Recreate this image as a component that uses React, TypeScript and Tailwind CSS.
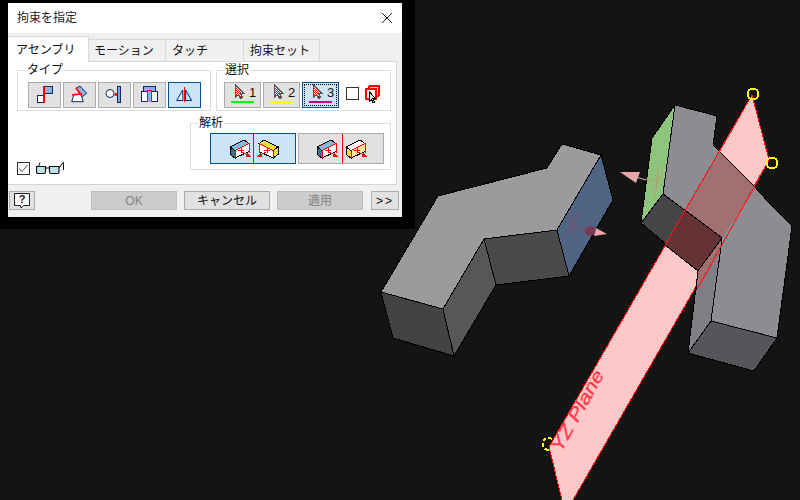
import React from 'react';

const pts = (p: number[][]) => p.map(a => a.join(',')).join(' ');

// 3D viewport shapes, in page coordinates
const faces: { fill: string; p: number[][] }[] = [
    { fill: '#9b9b9e', p: [[381, 292], [438, 196], [547, 168], [562, 144], [601, 155], [557, 230], [484, 239], [443, 309]] },
    { fill: '#434345', p: [[381, 292], [443, 309], [454, 356], [393, 338]] },
    { fill: '#57575a', p: [[443, 309], [484, 239], [496, 285], [454, 356]] },
    { fill: '#4a4a4c', p: [[484, 239], [557, 230], [569, 276], [496, 285]] },
    { fill: '#4f6583', p: [[601, 155], [613, 200], [569, 276], [557, 230]] },
    { fill: '#8dc57c', p: [[675, 105], [652, 138], [641, 223], [663, 194]] },
    { fill: '#8e8c91', p: [[675, 105], [717, 116], [713, 145], [792, 226], [777, 338], [711, 321], [722, 238], [663, 194]] },
    { fill: '#7f8085', p: [[722, 238], [711, 321], [688, 353], [698, 271]] },
    { fill: '#56565a', p: [[711, 321], [777, 338], [754, 371], [688, 353]] },
    { fill: '#454547', p: [[663, 194], [722, 238], [698, 271], [641, 223]] },
];

const overlaps: { fill: string; p: number[][] }[] = [
    { fill: '#a07072', p: [[720, 152], [756, 188], [722, 238], [685, 210]] },
    { fill: '#653335', p: [[685, 210], [722, 238], [698, 271], [665, 245]] },
    { fill: '#a07072', p: [[722, 238], [720, 253], [698, 288], [698, 271]] },
];

const Scene = () => (
    <svg width="800" height="500" viewBox="0 0 800 500" className="absolute inset-0">
        <polygon points={pts([[752, 95], [769, 160], [573, 500], [562, 500], [549, 447]])} fill="#ffc8c8" stroke="#ff1010" shapeRendering="crispEdges" />
        <text transform="translate(561,453) rotate(-61)" fontFamily="'Liberation Sans', sans-serif" fontStyle="italic" fontSize="18" fill="#ff3b4a" stroke="#ff3b4a" strokeWidth="0.3" textLength="90" lengthAdjust="spacingAndGlyphs">YZ Plane</text>
        {faces.map((f, i) => (
            <polygon key={i} points={pts(f.p)} fill={f.fill} stroke="#000" shapeRendering="crispEdges" />
        ))}
        {overlaps.map((f, i) => (
            <polygon key={i} points={pts(f.p)} fill={f.fill} shapeRendering="crispEdges" />
        ))}
        <g stroke="#000" shapeRendering="crispEdges">
            <line x1="720" y1="152" x2="756" y2="188" />
            <line x1="685" y1="210" x2="722" y2="238" />
            <line x1="722" y1="238" x2="698" y2="271" />
            <line x1="665" y1="245" x2="698" y2="271" />
            <line x1="722" y1="238" x2="719" y2="262" />
            <line x1="698" y1="271" x2="696" y2="290" />
        </g>
        <line x1="752" y1="95" x2="665" y2="245" stroke="#ff1010" shapeRendering="crispEdges" />
        <line x1="769" y1="160" x2="698" y2="288" stroke="#ff1010" shapeRendering="crispEdges" />

        {/* work point marks on the faces */}
        <g stroke="#7f4c66" fill="none">
            <line x1="581" y1="210" x2="563" y2="239" />
            <line x1="569" y1="215" x2="575" y2="237" />
            <line x1="572" y1="225" x2="590" y2="231" />
        </g>
        <circle cx="590" cy="231" r="5" fill="#7a3a55" />
        <polygon points="596,228 607,234 594,236" fill="#e8a8aa" />
        <g stroke="#b5a06a" fill="none">
            <line x1="659" y1="164" x2="655" y2="198" />
            <line x1="663" y1="173" x2="651" y2="190" />
            <line x1="646" y1="179" x2="657" y2="182" />
        </g>
        <line x1="636" y1="177" x2="646" y2="180" stroke="#e8b0b0" />
        <polygon points="620,172 640,172 636,183" fill="#e8a8aa" />

        <g fill="none" stroke="#ffff00" strokeWidth="2" shapeRendering="crispEdges">
            <circle cx="753" cy="94" r="5.5" />
            <circle cx="772" cy="163" r="5.5" />
            <path d="M 552 439 A 6 6 0 1 0 552 449" strokeDasharray="4 2" />
        </g>
    </svg>
);

const Group = ({ title, legendClass, className, children }: { title: string; legendClass: string; className: string; children: React.ReactNode }) => (
    <fieldset className={`border border-[#dcdcdc] flex ${className}`}>
        <legend className={`text-[12px] leading-4 text-[#111] px-[1px] ${legendClass}`}>{title}</legend>
        {children}
    </fieldset>
);

const IconButton = ({ active, className, children }: { active?: boolean; className: string; children: React.ReactNode }) => (
    <div className={`relative border h-[26px] shrink-0 ${active ? 'bg-[#cce4f7] border-[#005499]' : 'bg-[#e1e1e1] border-[#adadad]'} ${className}`}>
        {children}
    </div>
);

const navy = '#0b2a6b';

const TypeIcon = ({ n }: { n: number }) => (
    <svg width="33" height="26" viewBox="0 0 33 26" className="absolute -left-px -top-px">
        {n === 0 && (
            <g shapeRendering="crispEdges">
                <rect x="16.5" y="4.5" width="8" height="7" fill="#8fb0dc" stroke={navy} />
                <rect x="9.5" y="13.5" width="7" height="7" fill="#fff" stroke={navy} />
                <rect x="15" y="4" width="2" height="17" fill="#f00" />
            </g>
        )}
        {n === 1 && (
            <g>
                <polygon points="13,6.3 17,4 23.7,11.3 19.3,14.7" fill="#8fb0dc" stroke={navy} />
                <polygon points="8.7,19.7 20.3,19.7 18,12.3 11,12.3" fill="#fff" stroke={navy} />
                <line x1="13" y1="6" x2="19" y2="14" stroke="#f00" strokeWidth="1.6" />
                <line x1="9" y1="13" x2="19" y2="12" stroke="#f00" strokeWidth="1.4" />
            </g>
        )}
        {n === 2 && (
            <g>
                <circle cx="12" cy="11.5" r="4" fill="#fff" stroke={navy} />
                <rect x="19.5" y="4.5" width="3" height="16" fill="#7fa6da" stroke={navy} shapeRendering="crispEdges" />
                <circle cx="18" cy="12.5" r="1.6" fill="#f00" />
            </g>
        )}
        {n === 3 && (
            <g shapeRendering="crispEdges">
                <rect x="10.5" y="4.5" width="12" height="9" fill="#8fb0dc" stroke={navy} />
                <rect x="8.5" y="9.5" width="6" height="10" fill="#fff" stroke={navy} />
                <rect x="18.5" y="9.5" width="6" height="10" fill="#fff" stroke={navy} />
                <rect x="14.5" y="8.5" width="4" height="11" fill="#8fb0dc" />
                <rect x="14" y="8" width="1" height="12" fill="#f00" />
                <rect x="18" y="8" width="1" height="12" fill="#f00" />
                <rect x="14" y="8" width="5" height="1" fill="#f00" />
            </g>
        )}
        {n === 4 && (
            <g>
                <polygon points="8.7,18.5 15,18.5 14.7,8" fill="#e8f0f8" stroke={navy} />
                <polygon points="17.5,18.5 23.7,18.5 17.7,8" fill="#c5d9ef" stroke={navy} />
                <rect x="15.5" y="5" width="1.2" height="15" fill="#f00" shapeRendering="crispEdges" />
            </g>
        )}
    </svg>
);

const Cursor = ({ x, y }: { x: number; y: number }) => (
    <svg width="11" height="16" viewBox="0 0 11 16" className="absolute" style={{ left: x, top: y }}>
        <defs>
            <pattern id="chk" width="2" height="2" patternUnits="userSpaceOnUse">
                <rect width="2" height="2" fill="#fff" />
                <rect width="1" height="1" fill="#f00" />
                <rect x="1" y="1" width="1" height="1" fill="#f00" />
            </pattern>
        </defs>
        <polygon points="1.5,1 1.5,13 4.5,10.5 6.5,14.5 8.5,13.5 6.5,9.5 10,9.5" fill="url(#chk)" stroke="#555" shapeRendering="crispEdges" />
    </svg>
);

const SelectButton = ({ num, bar, active }: { num: string; bar: string; active?: boolean }) => (
    <IconButton active={active} className="w-[37px]">
        {active && <div className="absolute inset-[1px] border border-dotted border-black" />}
        <Cursor x={9} y={1} />
        <span className="absolute left-[24px] top-[2px] text-[13px] leading-4 font-['Liberation_Sans',sans-serif] text-[#111]">{num}</span>
        <div className={`absolute left-[6px] top-[18px] w-[23px] h-[2px] ${bar}`} />
    </IconButton>
);

// little isometric block with the red offset symbol, used by the two analysis buttons
const Block = ({ x, flip, top, front, side }: { x: number; flip?: boolean; top: string; front: string; side: string }) => (
    <g transform={flip ? `translate(${x + 19},6) scale(-1,1)` : `translate(${x},6)`} shapeRendering="crispEdges">
        <polygon points="0,7 14,0 19,3.5 5,10.5" fill={top} stroke="#000" />
        <polygon points="0,7 5,10.5 5,18 0,14.5" fill={side} stroke="#000" />
        <polygon points="5,10.5 19,3.5 19,11.5 5,18" fill={front} stroke="#000" />
        <polyline points="5,18 5,10.5 19,3.5 19,13" fill="none" stroke="#f00" />
        <path d="M 11 7 L 11 13 M 8 10 L 14 10 M 12 12 L 20 16" stroke="#f00" fill="none" />
        <polygon points="17,13 22,17 16,17" fill="#f00" />
    </g>
);

const AnalysisIcon = ({ second }: { second?: boolean }) => (
    <svg width="84" height="29" viewBox="0 0 84 29" className="absolute left-0 top-0">
        <Block x={second ? 18 : 19} top="#8fb5dc" front="#fff" side="#4a6a95" />
        <rect x={second ? 43 : 42} y="0" width="1" height="29" fill="#f00" />
        {second
            ? <Block x={47} top="#fff" front="#ffe9a0" side="#ffdc3c" />
            : <Block x={48} flip top="#ffdc3c" front="#fff" side="#ffdc3c" />}
    </svg>
);

const Glasses = () => (
    <svg width="29" height="13" viewBox="0 0 29 13" className="block">
        <path d="M 4 0.5 L 2.5 4.5" fill="none" stroke="#111" />
        <path d="M 0.5 4.5 L 9.5 4.5 L 9.5 10 Q 9.5 11.5 8 11.5 L 2 11.5 Q 0.5 11.5 0.5 10 Z" fill="#bfe0e6" stroke="#111" strokeWidth="1.2" />
        <path d="M 13.5 4.5 L 23 4.5 L 23 10 Q 23 11.5 21.5 11.5 L 15 11.5 Q 13.5 11.5 13.5 10 Z" fill="#bfe0e6" stroke="#111" strokeWidth="1.2" />
        <path d="M 9.5 6 L 13.5 6 M 23 6 L 26.5 1 L 27.5 0.5 L 27.5 8" fill="none" stroke="#111" />
    </svg>
);

const BottomButton = ({ label, disabled, className }: { label: string; disabled?: boolean; className: string }) => (
    <div className={`border h-[19px] flex items-center justify-center text-[12px] leading-none ${disabled ? 'bg-[#cccccc] border-[#bfbfbf] text-[#838383]' : 'bg-[#e1e1e1] border-[#adadad] text-[#111]'} ${className}`}>
        {label}
    </div>
);

export default function App() {
    return (
        <div className="relative w-[800px] h-[500px] overflow-hidden bg-[#141414] font-['Liberation_Sans','Noto_Sans_CJK_JP',sans-serif]">
            <Scene />

            {/* dialog with its black frame */}
            <div className="absolute left-0 top-0 w-[415px] h-[229px] bg-black pl-[8px] pt-[3px]">
                <div className="w-[394px] h-[214px] flex flex-col bg-[#f0f0f0]">
                    <div className="h-[30px] shrink-0 bg-white flex items-center justify-between pl-[9px] pr-[8px]">
                        <span className="text-[12px] text-[#222]">拘束を指定</span>
                        <svg width="14" height="14" viewBox="0 0 14 14">
                            <path d="M 2 2 L 12 12 M 12 2 L 2 12" stroke="#222" fill="none" />
                        </svg>
                    </div>

                    <div className="relative flex items-end h-[29px] shrink-0 mt-0 pt-[4px]">
                        <div className="relative z-10 w-[81px] h-[26px] bg-white border-t border-r border-[#d9d9d9] text-[12px] text-[#111] pl-[8px] pt-[4px]">アセンブリ</div>
                        <div className="w-[77px] h-[23px] bg-[#f0f0f0] border-t border-r border-b border-[#d9d9d9] text-[12px] text-[#111] pl-[5px] pt-[2px]">モーション</div>
                        <div className="w-[78px] h-[23px] bg-[#f0f0f0] border-t border-r border-b border-[#d9d9d9] text-[12px] text-[#111] pl-[6px] pt-[2px]">タッチ</div>
                        <div className="w-[76px] h-[23px] bg-[#f0f0f0] border-t border-r border-b border-[#d9d9d9] text-[12px] text-[#111] pl-[6px] pt-[2px]">拘束セット</div>
                    </div>

                    <div className="w-[389px] h-[124px] shrink-0 bg-white border-r border-b border-t border-[#d4d4d4] -mt-px pl-[9px] pr-[5px] flex flex-col">
                        <div className="flex justify-between h-[49px] shrink-0">
                            <Group title="タイプ" legendClass="-ml-[2px]" className="w-[194px] pl-[10px] pr-[9px] pt-[4px] gap-[2px]">
                                {[0, 1, 2, 3, 4].map(n => (
                                    <IconButton key={n} active={n === 4} className="w-[33px]">
                                        <TypeIcon n={n} />
                                    </IconButton>
                                ))}
                            </Group>
                            <Group title="選択" legendClass="" className="w-[175px] pl-[7px] pt-[4px] gap-[2px] items-start">
                                <SelectButton num="1" bar="bg-[#00ff00]" />
                                <SelectButton num="2" bar="bg-[#ffff00]" />
                                <SelectButton num="3" bar="bg-[#c4008c]" active />
                                <div className="ml-[5px] mt-[5px] w-[13px] h-[13px] bg-white border border-[#333] shrink-0" />
                                <svg width="16" height="18" viewBox="0 0 16 18" className="ml-[4px] mt-[3px] shrink-0">
                                    <g shapeRendering="crispEdges" fill="none" stroke="#f00">
                                        <rect x="4.5" y="0.5" width="10" height="10" fill="#ffd0d0" />
                                        <rect x="3.5" y="1.5" width="10" height="10" />
                                        <rect x="0.5" y="3.5" width="11" height="11" fill="#fff" />
                                        <rect x="1.5" y="4.5" width="9" height="9" />
                                    </g>
                                    <polygon points="4.5,7 4.5,16 6.5,14.5 8,17.5 9.5,17 8,13.5 10.5,13.5" fill="#ddd" stroke="#000" shapeRendering="crispEdges" />
                                </svg>
                            </Group>
                        </div>
                        <div className="flex justify-between mt-[4px]">
                            <div className="flex items-center gap-[6px] mt-[46px] h-[14px]">
                                <div className="w-[13px] h-[13px] bg-white border border-[#333] flex items-center justify-center">
                                    <svg width="11" height="11" viewBox="0 0 11 11">
                                        <path d="M 1.5 5.5 L 4 8.5 L 9.5 2" fill="none" stroke="#555" />
                                    </svg>
                                </div>
                                <Glasses />
                            </div>
                            <Group title="解析" legendClass="-ml-[12px]" className="w-[201px] h-[55px] pl-[19px] pt-[2px] gap-[2px] items-start">
                                <IconButton active className="w-[86px] !h-[31px]"><AnalysisIcon /></IconButton>
                                <IconButton className="w-[86px] !h-[31px]"><AnalysisIcon second /></IconButton>
                            </Group>
                        </div>
                    </div>

                    <div className="flex items-start pt-[6px] pl-[1px]">
                        <div className="w-[26px] h-[19px] border border-[#adadad] bg-[#e1e1e1] flex items-center justify-center">
                            <svg width="18" height="17" viewBox="0 0 18 17">
                                <path d="M 1.5 1.5 L 16.5 1.5 L 16.5 13.5 L 10.5 13.5 L 8 16 L 7.5 13.5 L 1.5 13.5 Z" fill="#fff" stroke="#222" />
                                <text x="9" y="11" textAnchor="middle" fontSize="11" fontWeight="700" fontFamily="'Liberation Sans', sans-serif" fill="#222">?</text>
                            </svg>
                        </div>
                        <BottomButton label="OK" disabled className="w-[86px] ml-[56px]" />
                        <BottomButton label="キャンセル" className="w-[86px] ml-[7px]" />
                        <BottomButton label="適用" disabled className="w-[86px] ml-[7px]" />
                        <BottomButton label=">>" className="w-[28px] ml-[8px] tracking-[2px]" />
                    </div>
                </div>
            </div>
        </div>
    );
}
